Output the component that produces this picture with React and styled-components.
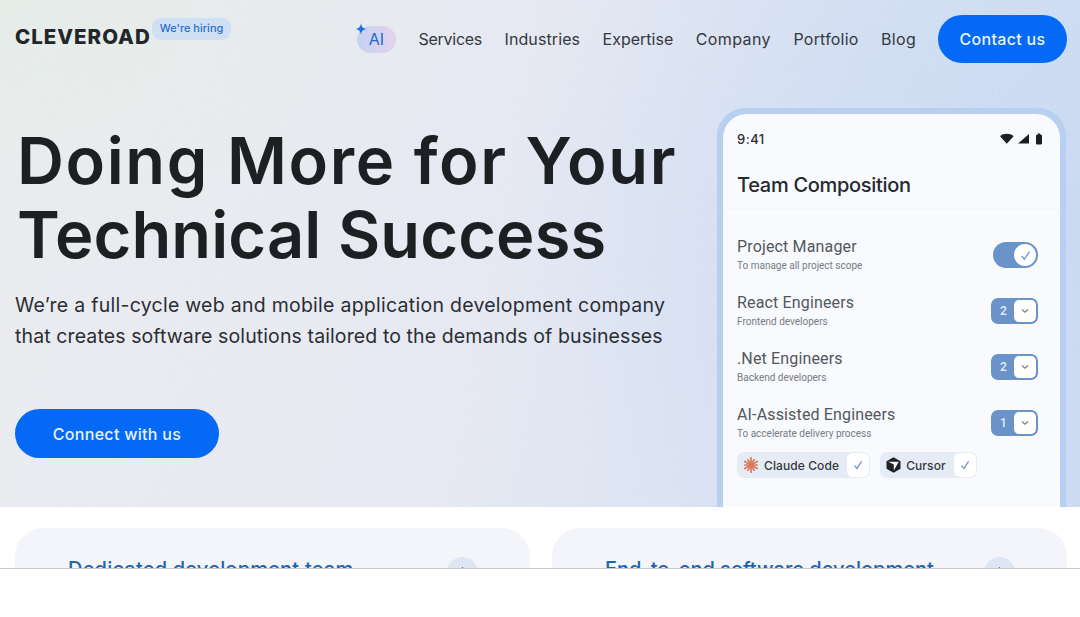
import React from "react";
import styled, { createGlobalStyle } from "styled-components";

const Global = createGlobalStyle`
  html, body { margin: 0; padding: 0; background: #fff; }
  body { font-family: Inter, "Liberation Sans", sans-serif; }
`;

const Page = styled.div`
  position: relative;
  width: 1080px;
  height: 617px;
  overflow: hidden;
  background: #fff;
`;

const Hero = styled.section`
  position: relative;
  height: 507px;
  overflow: hidden;
  background:
    radial-gradient(480px 280px at 0% 0%, rgba(227, 235, 229, 0.9), rgba(227, 235, 229, 0) 100%),
    radial-gradient(560px 420px at 100% 45%, rgba(192, 212, 240, 0.6), rgba(192, 212, 240, 0) 100%),
    linear-gradient(100deg, #e9eaee 0%, #e4e7f1 45%, #d3def2 75%, #cbdaf1 100%);
`;

const Grain = styled.svg`
  position: absolute;
  inset: 0;
  width: 100%;
  height: 100%;
  opacity: 0.28;
  pointer-events: none;
`;

const Header = styled.header`
  position: relative;
  display: flex;
  align-items: center;
  height: 48px;
  padding: 15px 13px 0 15px;
`;

const Brand = styled.div`
  display: flex;
  align-items: flex-start;
  align-self: flex-start;
  width: 343px;
`;

const Logo = styled.span`
  margin-top: 11px;
  font-size: 20.5px;
  line-height: 22px;
  font-weight: 800;
  letter-spacing: 1px;
  color: #22262a;
`;

const Hiring = styled.span`
  margin: 3px 0 0 1px;
  padding: 0 8px;
  height: 22px;
  line-height: 21px;
  border-radius: 9px;
  background: #cfe0f4;
  color: #2a6fc9;
  font-size: 11px;
  font-weight: 500;
  white-space: nowrap;
`;

const Nav = styled.nav`
  display: flex;
  align-items: center;
  gap: 22.5px;
`;

const AiLink = styled.span`
  position: relative;
  display: flex;
  align-items: center;
  justify-content: center;
  width: 39px;
  height: 27px;
  border-radius: 14px;
  background: linear-gradient(90deg, #c5d2f1, #e3d3ec);
  color: #2469d0;
  font-size: 16px;
`;

const Spark = styled.svg`
  position: absolute;
  left: -2px;
  top: -3px;
`;

const NavLink = styled.a`
  font-size: 16px;
  line-height: 20px;
  letter-spacing: ${(p) => p.$ls}px;
  color: #33383f;
  white-space: nowrap;
`;

const PillButton = styled.button`
  border: 0;
  border-radius: 25px;
  background: #0469f5;
  color: #e9f3ff;
  font-family: Inter, sans-serif;
  font-size: 16px;
  font-weight: 500;
  letter-spacing: 0.3px;
  width: ${(p) => p.$w}px;
  height: ${(p) => p.$h}px;
  padding: 0;
`;

const ContactSlot = styled.div`
  margin-left: 22px;
`;

const HeroBody = styled.div`
  position: relative;
  display: flex;
  justify-content: space-between;
  padding: 45px 14px 0 15px;
`;

const Copy = styled.div`
  display: flex;
  flex-direction: column;
  align-items: flex-start;
  width: 680px;
`;

const Title = styled.h1`
  margin: 16px 0 0 2px;
  font-size: 65px;
  line-height: 74px;
  font-weight: 600;
  color: #1d2022;
  white-space: nowrap;
`;

const TitleLine = styled.span`
  display: block;
  letter-spacing: ${(p) => p.$ls}px;
`;

const Lead = styled.p`
  margin: 18px 0 0;
  font-size: 19.5px;
  line-height: 31px;
  color: #2a2e33;
  white-space: nowrap;
`;

const LeadLine = styled.span`
  display: block;
  letter-spacing: ${(p) => p.$ls}px;
`;

const CtaSlot = styled.div`
  margin-top: 57px;
`;

const PhoneFrame = styled.div`
  width: 337px;
  height: 420px;
  padding: 6px 6px 0;
  border-radius: 28px 28px 0 0;
  background: #b9cff0;
`;

const PhoneScreen = styled.div`
  height: 100%;
  box-sizing: border-box;
  padding: 0 22px 0 14px;
  border-radius: 24px 24px 0 0;
  background: #f8fafe;
  color: #2b2e33;
  font-family: Roboto, Inter, sans-serif;
`;

const Status = styled.div`
  display: flex;
  align-items: center;
  justify-content: space-between;
  height: 50px;
  margin-right: -7px;
  font-family: Inter, sans-serif;
  font-size: 13px;
  font-weight: 500;
  letter-spacing: 0.5px;
`;

const PhoneTitle = styled.h2`
  margin: 0 -22px 0 -14px;
  height: 44px;
  padding-left: 14px;
  font-family: Inter, sans-serif;
  font-size: 20px;
  font-weight: 500;
  line-height: 42px;
  letter-spacing: -0.3px;
  color: #26292d;
  border-bottom: 1px solid #f3f5fa;
`;

const Rows = styled.div`
  padding-top: 25px;
  display: flex;
  flex-direction: column;
  gap: 16px;
`;

const Row = styled.div`
  display: flex;
  align-items: flex-start;
  justify-content: space-between;
  height: 40px;
`;

const RowText = styled.div`
  padding-top: 2px;
`;

const RowLabel = styled.div`
  font-size: 16px;
  line-height: 22px;
  letter-spacing: 0.15px;
  color: #53575d;
`;

const RowSub = styled.div`
  margin-top: 1px;
  font-size: 10px;
  line-height: 14px;
  color: #777b82;
`;

const Toggle = styled.div`
  display: flex;
  align-items: center;
  justify-content: flex-end;
  width: 45px;
  height: 26px;
  margin-top: 8px;
  box-sizing: border-box;
  padding-right: 2px;
  border-radius: 13px;
  background: #6a93ca;
`;

const ToggleKnob = styled.div`
  display: flex;
  align-items: center;
  justify-content: center;
  width: 22px;
  height: 22px;
  border-radius: 50%;
  background: #fff;
`;

const Stepper = styled.div`
  display: flex;
  align-items: center;
  width: 47px;
  height: 26px;
  margin-top: 8px;
  box-sizing: border-box;
  padding: 2px;
  border-radius: 7px;
  background: #6a93ca;
  color: #e6eefa;
  font-size: 12px;
  font-weight: 500;
`;

const StepValue = styled.span`
  width: 21px;
  text-align: center;
`;

const StepCaret = styled.span`
  display: flex;
  align-items: center;
  justify-content: center;
  flex: 1;
  height: 100%;
  border-radius: 5px;
  background: #fff;
`;

const Chips = styled.div`
  display: flex;
  gap: 10px;
  margin-top: 10px;
`;

const Chip = styled.div`
  display: flex;
  align-items: center;
  height: 26px;
  padding: 0 1px 0 6px;
  gap: 5px;
  border-radius: 7px;
  background: #e6ecf6;
  font-family: Inter, sans-serif;
  font-size: 12px;
  font-weight: 500;
  letter-spacing: 0.1px;
  color: #33373c;
`;

const ChipCheck = styled.span`
  display: flex;
  align-items: center;
  justify-content: center;
  width: 22px;
  height: 24px;
  margin-left: 3px;
  border-radius: 6px;
  background: #fff;
`;

const Cards = styled.section`
  display: grid;
  grid-template-columns: 515px 515px;
  gap: 22px;
  padding: 21px 13px 0 15px;
`;

const Card = styled.article`
  display: flex;
  align-items: flex-start;
  justify-content: space-between;
  height: 110px;
  box-sizing: border-box;
  padding: 29px 52px 0 53px;
  border-radius: 28px;
  background: #f4f5fb;
`;

const CardTitle = styled.h3`
  margin: 0;
  font-size: 20px;
  line-height: 24px;
  font-weight: 500;
  letter-spacing: ${(p) => p.$ls}px;
  color: #1b64b4;
  white-space: nowrap;
`;

const CardIcon = styled.div`
  display: flex;
  align-items: center;
  justify-content: center;
  width: 31px;
  height: 31px;
  border-radius: 50%;
  background: #dfe6f3;
`;

const Footer = styled.div`
  position: absolute;
  left: 0;
  right: 0;
  top: 568px;
  bottom: 0;
  background: #fff;
  border-top: 1px solid #c9c9cf;
`;

const Check = ({ size = 10, color = "#6a93ca" }) => (
  <svg width={size} height={size} viewBox="0 0 10 10" fill="none">
    <path d="M1.5 5.6 4 8.4 8.6 1.4" stroke={color} strokeWidth="1.2" />
  </svg>
);

const Caret = () => (
  <svg width="8" height="6" viewBox="0 0 8 6" fill="none">
    <path d="M1 1.4 4 4.2 7 1.4" stroke="#7d8590" strokeWidth="1.3" />
  </svg>
);

const Plus = () => (
  <svg width="11" height="11" viewBox="0 0 11 11" fill="none">
    <path d="M5.500 0v11M0 5.500h11" stroke="#5a7fb5" strokeWidth="1.2" />
  </svg>
);

const StatusIcons = () => (
  <svg width="45" height="12" viewBox="0 0 45 12">
    <path d="M0 3.200C3.600 0 10 0 13.600 3.200L6.800 10.800Z" fill="#1c1e22" />
    <path d="M29 1v9.600H18Z" fill="#1c1e22" />
    <path d="M36 2.600c0-.5.4-.9.9-.9h.8V.4h2.600v1.300h.8c.5 0 .9.4.9.9v8c0 .5-.4.8-.9.8h-4.200c-.5 0-.9-.3-.9-.8Z" fill="#1c1e22" />
  </svg>
);

const ClaudeMark = () => (
  <svg width="16" height="16" viewBox="0 0 16 16" stroke="#d9785a" strokeWidth="1.7" strokeLinecap="round">
    {[0, 30, 60, 90, 120, 150, 180, 210, 240, 270, 300, 330].map((a) => (
      <line key={a} x1="8" y1="8" x2="8" y2={a % 60 === 0 ? 0.8 : 1.8} transform={`rotate(${a} 8 8)`} />
    ))}
  </svg>
);

const CursorMark = () => (
  <svg width="15" height="16" viewBox="0 0 15 16">
    <path d="M7.500 .3 14.500 4.200v7.600L7.500 15.700.5 11.800V4.200Z" fill="#1f2124" />
    <path d="M2.200 4.700h10.600L7.800 13.500V7.600Z" fill="#f1f4fa" />
  </svg>
);

const roles = [
  ["React Engineers", "Frontend developers", "2"],
  [".Net Engineers", "Backend developers", "2"],
  ["AI-Assisted Engineers", "To accelerate delivery process", "1"],
];

const links = [
  ["Services", -0.27],
  ["Industries", 0.1],
  ["Expertise", 0],
  ["Company", 0.4],
  ["Portfolio", 0.2],
  ["Blog", 0.3],
];

export default function App() {
  return (
    <Page>
      <Global />
      <Hero>
        <Grain aria-hidden="true">
          <filter id="grain">
            <feTurbulence type="fractalNoise" baseFrequency="0.8" numOctaves="2" />
            <feColorMatrix values="0 0 0 0 1  0 0 0 0 1  0 0 0 0 1  0 0 0 1.2 -0.3" />
          </filter>
          <rect width="100%" height="100%" filter="url(#grain)" />
        </Grain>
        <Header>
          <Brand>
            <Logo>CLEVEROAD</Logo>
            <Hiring>We're hiring</Hiring>
          </Brand>
          <Nav>
            <AiLink>
              <Spark width="12" height="13" viewBox="0 0 13 14">
                <path d="M6.500 0C7 4 8.500 6 12.500 6.500 8.500 7.200 7 9 6.500 13 6 9 4.500 7.200.5 6.500 4.500 6 6 4 6.500 0Z" fill="#1f6fe0" />
              </Spark>
              AI
            </AiLink>
            {links.map(([l, ls]) => (
              <NavLink key={l} $ls={ls}>{l}</NavLink>
            ))}
          </Nav>
          <ContactSlot>
            <PillButton $w={129} $h={48}>Contact us</PillButton>
          </ContactSlot>
        </Header>
        <HeroBody>
          <Copy>
            <Title>
              <TitleLine $ls={1.6}>Doing More for Your</TitleLine>
              <TitleLine $ls={0.1}>Technical Success</TitleLine>
            </Title>
            <Lead>
              <LeadLine $ls={0.26}>We’re a full-cycle web and mobile application development company</LeadLine>
              <LeadLine $ls={0.11}>that creates software solutions tailored to the demands of businesses</LeadLine>
            </Lead>
            <CtaSlot>
              <PillButton $w={204} $h={49}>Connect with us</PillButton>
            </CtaSlot>
          </Copy>
          <PhoneFrame>
            <PhoneScreen>
              <Status>
                <span>9:41</span>
                <StatusIcons />
              </Status>
              <PhoneTitle>Team Composition</PhoneTitle>
              <Rows>
                <Row>
                  <RowText>
                    <RowLabel>Project Manager</RowLabel>
                    <RowSub>To manage all project scope</RowSub>
                  </RowText>
                  <Toggle>
                    <ToggleKnob>
                      <Check size={11} />
                    </ToggleKnob>
                  </Toggle>
                </Row>
                {roles.map(([label, sub, n]) => (
                  <Row key={label}>
                    <RowText>
                      <RowLabel>{label}</RowLabel>
                      <RowSub>{sub}</RowSub>
                    </RowText>
                    <Stepper>
                      <StepValue>{n}</StepValue>
                      <StepCaret>
                        <Caret />
                      </StepCaret>
                    </Stepper>
                  </Row>
                ))}
              </Rows>
              <Chips>
                <Chip>
                  <ClaudeMark />
                  Claude Code
                  <ChipCheck>
                    <Check />
                  </ChipCheck>
                </Chip>
                <Chip>
                  <CursorMark />
                  Cursor
                  <ChipCheck>
                    <Check />
                  </ChipCheck>
                </Chip>
              </Chips>
            </PhoneScreen>
          </PhoneFrame>
        </HeroBody>
      </Hero>
      <Cards>
        <Card>
          <CardTitle $ls={0.2}>Dedicated development team</CardTitle>
          <CardIcon>
            <Plus />
          </CardIcon>
        </Card>
        <Card>
          <CardTitle $ls={0}>End-to-end software development</CardTitle>
          <CardIcon>
            <Plus />
          </CardIcon>
        </Card>
      </Cards>
      <Footer />
    </Page>
  );
}
